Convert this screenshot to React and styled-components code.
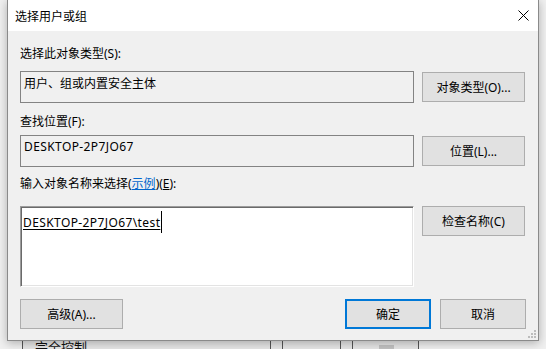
import React from "react";
import styled, {createGlobalStyle} from "styled-components";

const GlobalStyle = createGlobalStyle`
  html, body {
    margin: 0;
    padding: 0;
    background: #f0f0f0;
  }
  body {
    font-family: "Noto Sans", "Noto Sans CJK SC", sans-serif;
    font-size: 12px;
    color: #000;
    overflow: hidden;
  }
`;

const Page = styled.div`
  width: 546px;
  height: 349px;
  overflow: hidden;
  background: #f0f0f0;
`;

const Dialog = styled.div`
  position: relative;
  z-index: 1;
  box-sizing: border-box;
  width: 532px;
  margin-left: 7px;
  background: #f0f0f0;
  border: 1px solid #8a8a8a;
  border-top: none;
  box-shadow: 0 2px 9px rgba(0, 0, 0, 0.28);
`;

const TitleBar = styled.div`
  display: flex;
  align-items: center;
  justify-content: space-between;
  height: 31px;
  padding: 0 9px 0 7px;
  background: #fff;
  font-family: "Noto Sans CJK SC", sans-serif;
`;

const Body = styled.div`
  display: flex;
  flex-direction: column;
  padding: 15px 12px 11px 12px;
`;

const Label = styled.div`
  height: 16px;
  line-height: 16px;
  margin-top: ${(p) => p.$top || 0}px;
  margin-bottom: ${(p) => p.$bottom || 0}px;
  white-space: nowrap;

  a {
    color: #0066cc;
    text-decoration: underline;
  }
  u {
    text-decoration: underline;
  }
`;

const Row = styled.div`
  display: flex;
  align-items: flex-start;
  gap: 8px;
`;

const ReadBox = styled.div`
  box-sizing: border-box;
  width: 394px;
  height: 32px;
  padding: ${(p) => p.$top || 3}px 3px 0;
  line-height: 16px;
  border: 1px solid #838383;
  background: #f0f0f0;
  white-space: nowrap;
`;

const NameArea = styled.div`
  box-sizing: border-box;
  width: 394px;
  height: 81px;
  padding: 4px 2px 0;
  background: #fff;
  border: 1px solid;
  border-color: #9c9c9c #fff #fff #9c9c9c;
  box-shadow: inset 1px 1px #6a6a6a, inset -1px -1px #e3e3e3;
  line-height: 16px;
  white-space: nowrap;
`;

const Latin = styled.span`
  letter-spacing: 0.4px;
`;

const Resolved = styled(Latin)`
  text-decoration: underline;
  text-underline-offset: 2px;
`;

const Caret = styled.span`
  display: inline-block;
  width: 1px;
  height: 22px;
  margin-left: 1px;
  vertical-align: -6px;
  background: #000;
`;

const Button = styled.button`
  box-sizing: border-box;
  flex: none;
  width: ${(p) => p.$width || 103}px;
  height: 30px;
  margin-top: ${(p) => p.$top || 0}px;
  padding: 0;
  font: inherit;
  color: #000;
  background: #e1e1e1;
  border: ${(p) => (p.$primary ? "2px solid #0078d7" : "1px solid #adadad")};
  border-radius: 0;
`;

const Footer = styled.div`
  display: flex;
  align-items: center;
  gap: 9px;
  margin-top: 12px;
`;

const Spacer = styled.div`
  flex: 1;
`;

const Grip = styled.svg`
  position: absolute;
  right: 2px;
  bottom: 2px;
`;

const Backdrop = styled.div`
  display: flex;
  height: 8px;
  overflow: hidden;
  font-family: "Noto Sans CJK SC", sans-serif;
`;

const Cell = styled.div`
  box-sizing: border-box;
  flex: none;
  width: ${(p) => p.$width}px;
  height: 8px;
  background: ${(p) => p.$bg || "#e6e6e6"};
  border-right: ${(p) => (p.$line ? "1px solid #555" : "none")};
  border-left: ${(p) => (p.$lead ? "1px solid #555" : "none")};
  padding-left: ${(p) => p.$pad || 0}px;
  line-height: 16px;
  font-size: 13px;
  color: #111;
  white-space: nowrap;
`;

const CellText = styled.div`
  margin-top: -2px;
`;

const Thumb = styled.div`
  width: 15px;
  height: 5px;
  margin: 4px 0 0 26px;
  background: #c2c2c2;
`;

const CloseIcon = () => (
  <svg width="11" height="11" viewBox="0 0 11 11">
    <path d="M0.5 0.5 L10.5 10.5 M10.5 0.5 L0.5 10.5" stroke="#000" strokeWidth="1" fill="none" />
  </svg>
);

const App = () => {
  return (
    <Page>
      <GlobalStyle />
      <Dialog>
        <TitleBar>
          <span>选择用户或组</span>
          <CloseIcon />
        </TitleBar>
        <Body>
          <Label $bottom={9}>选择此对象类型(S):</Label>
          <Row>
            <ReadBox $top={4}>用户、组或内置安全主体</ReadBox>
            <Button $top={1}>对象类型(O)...</Button>
          </Row>
          <Label $top={11} $bottom={5}>查找位置(F):</Label>
          <Row>
            <ReadBox $top={3}>
              <Latin>DESKTOP-2P7JO67</Latin>
            </ReadBox>
            <Button $top={1}>位置(L)...</Button>
          </Row>
          <Label $top={9} $bottom={14}>
            输入对象名称来选择(<a href="#">示例</a>)(<u>E</u>):
          </Label>
          <Row>
            <NameArea>
              <Resolved>DESKTOP-2P7JO67\test</Resolved>
              <Caret />
            </NameArea>
            <Button>检查名称(C)</Button>
          </Row>
          <Footer>
            <Button>高级(A)...</Button>
            <Spacer />
            <Button $primary $width={86}>确定</Button>
            <Button $width={86}>取消</Button>
          </Footer>
        </Body>
        <Grip width="8" height="8" viewBox="0 0 8 8">
          <rect x="6" y="0" width="2" height="2" fill="#bcbcbc" />
          <rect x="3" y="3" width="2" height="2" fill="#bcbcbc" />
          <rect x="6" y="3" width="2" height="2" fill="#bcbcbc" />
          <rect x="0" y="6" width="2" height="2" fill="#bcbcbc" />
          <rect x="3" y="6" width="2" height="2" fill="#bcbcbc" />
          <rect x="6" y="6" width="2" height="2" fill="#bcbcbc" />
        </Grip>
      </Dialog>
      <Backdrop>
        <Cell $width={22} $bg="#f0f0f0" />
        <Cell $width={249} $lead $line $pad={12}>
          <CellText>完全控制</CellText>
        </Cell>
        <Cell $width={12} $line />
        <Cell $width={58} $line />
        <Cell $width={12} $line />
        <Cell $width={66} $line>
          <Thumb />
        </Cell>
        <Cell $width={127} $bg="#f0f0f0" />
      </Backdrop>
    </Page>
  );
};

export default App;
